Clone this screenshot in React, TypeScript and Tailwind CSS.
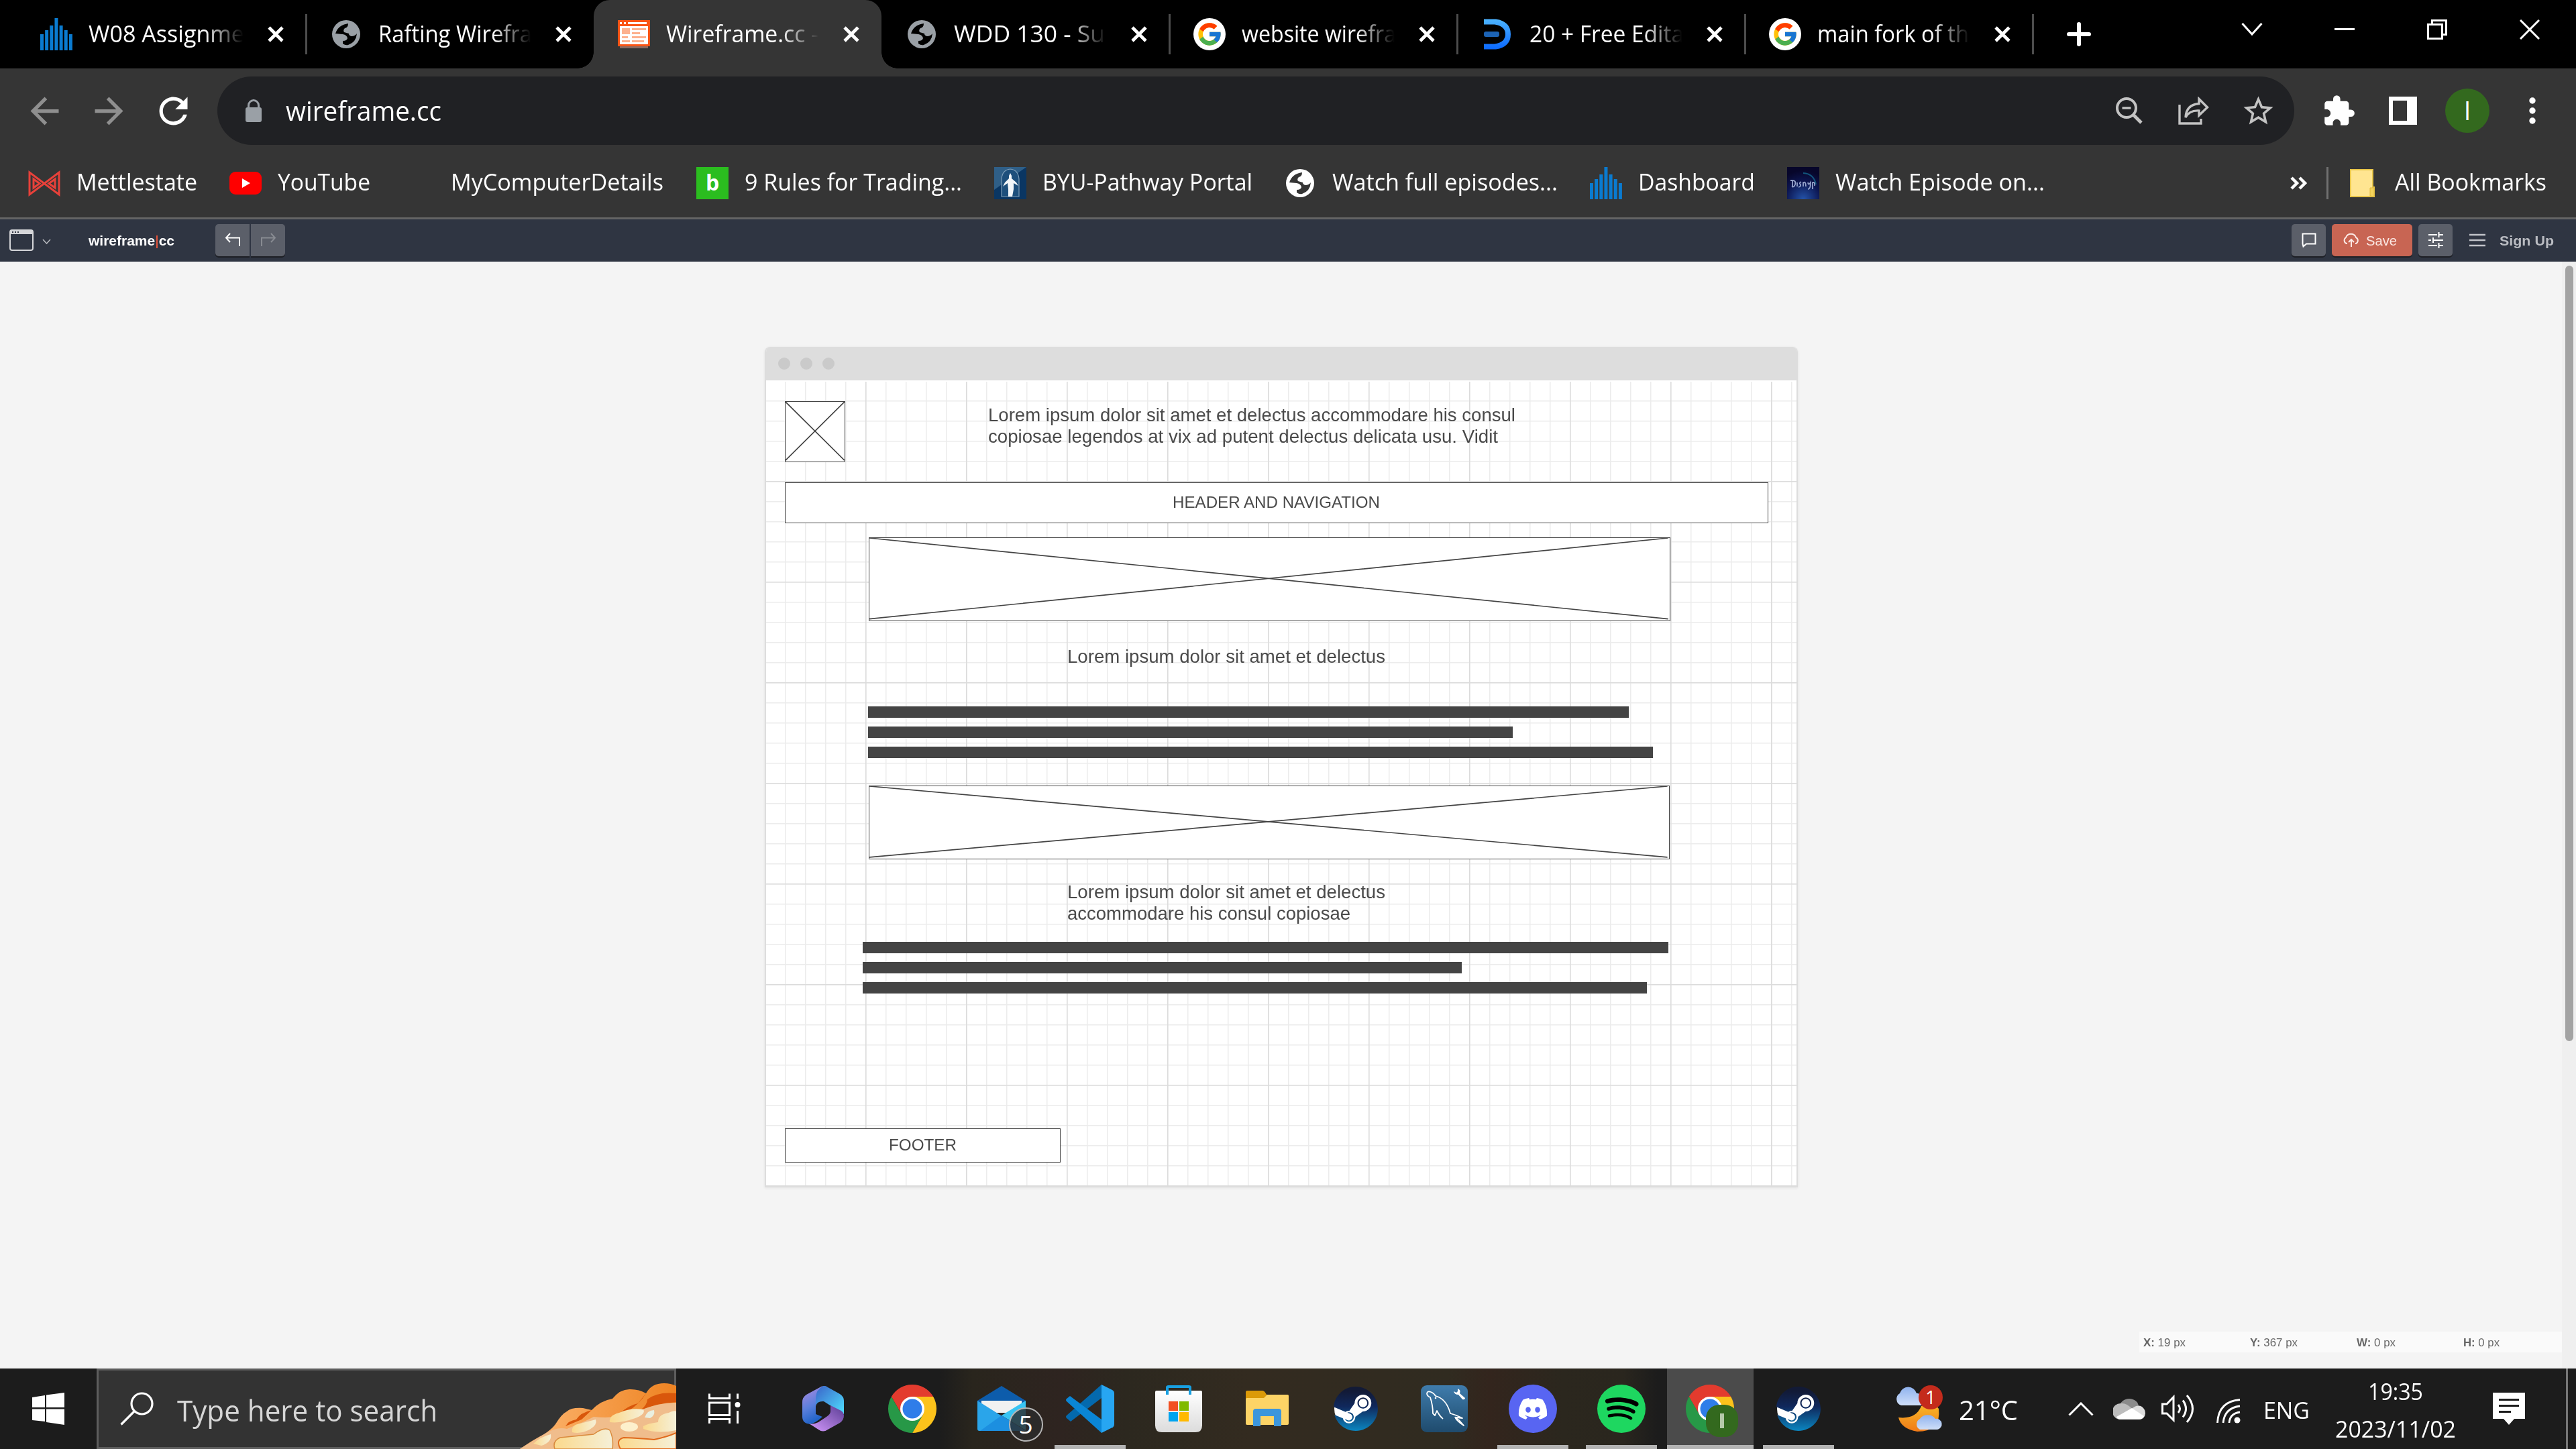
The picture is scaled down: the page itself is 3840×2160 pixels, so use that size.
import React, { useLayoutEffect, useRef, useState } from "react";
import { MdArrowBack, MdArrowForward, MdRefresh, MdStarBorder, MdExtension } from "react-icons/md";
import { FcGoogle } from "react-icons/fc";
import { FaDiscord, FaSteam, FaSpotify } from "react-icons/fa";

/* Text that is condensed or widened to a given advance width. */
function Fit({ w, className = "", children }: { w: number; className?: string; children: React.ReactNode }) {
  const ref = useRef<HTMLSpanElement>(null);
  const [k, setK] = useState(1);
  useLayoutEffect(() => {
    if (ref.current) setK(w / parseFloat(getComputedStyle(ref.current).width));
  }, [w]);
  return (
    <span className={"block shrink-0 whitespace-nowrap " + className} style={{ width: w }}>
      <span ref={ref} className="inline-block origin-left" style={{ transform: `scaleX(${k})` }}>
        {children}
      </span>
    </span>
  );
}

/* ---------- shared icons ---------- */

function BarsIcon() {
  const tops = [24, 18, 11, 0, 11, 18, 24];
  return (
    <svg className="size-[48px] shrink-0" viewBox="0 0 48 48" fill="#0a7bd0">
      {tops.map((t, i) => (
        <rect key={i} x={i * 7.15} y={t} width="5" height={48 - t} />
      ))}
    </svg>
  );
}

function Globe({ className, land }: { className: string; land: string }) {
  return (
    <svg className={"size-[48px] shrink-0 " + className} viewBox="0 0 48 48">
      <circle cx="24" cy="24" r="21" fill="currentColor" />
      <path
        d="M27 8Q12 10 8 23L19 24Q25 25 26 30Q25 34 19 34V38Q23 41 27 40Q39 36 40 23Q37 27 32 27Q28 26 28 23L21 21Q19 18 22 15Q27 14 27 8Z"
        fill={land}
      />
    </svg>
  );
}

function GoogleIcon() {
  return (
    <span className="flex size-[48px] shrink-0 items-center justify-center rounded-full bg-white">
      <FcGoogle className="size-[40px]" />
    </span>
  );
}

function WireIcon() {
  return (
    <svg className="size-[48px] shrink-0" viewBox="0 0 48 48">
      <rect x="3" y="42" width="42" height="3" fill="#8d6a60" />
      <rect x="0" y="3" width="48" height="39" fill="#fa5414" />
      <path d="M3 6H6V9H3ZM9 6H12V9H9ZM15 6H43V9H15Z" fill="#fff" />
      <rect x="3" y="12" width="42" height="27" fill="#fff" />
      <path d="M6 15H18V24H6ZM21 15H42V18H21ZM21 21H33V24H21ZM6 27H15V30H6ZM21 27H42V30H21ZM6 33H18V36H6ZM21 33H39V36H21Z" fill="#fdb18e" />
    </svg>
  );
}

function EdrawIcon() {
  return (
    <svg className="size-[48px] shrink-0" viewBox="0 0 48 48" fill="none">
      <defs>
        <linearGradient id="ed" x1="0" y1="0" x2="0" y2="1">
          <stop offset="0" stopColor="#4cb4ff" />
          <stop offset="1" stopColor="#0a68ff" />
        </linearGradient>
      </defs>
      <path d="M4 1.500H22Q44 5 44 24Q44 43 22 46.500H4V38.500H20Q36 36 36 24Q36 12 20 9.500H4Z" fill="url(#ed)" />
      <rect x="4" y="20" width="23" height="8" rx="3" fill="#1c63b5" />
    </svg>
  );
}

function CloseX() {
  return (
    <svg className="h-[24px] w-[26px] shrink-0" viewBox="0 0 26 24" stroke="#fff" strokeWidth="4.800">
      <path d="M3 2L23 22M23 2L3 22" />
    </svg>
  );
}

/* ---------- tab strip ---------- */

const tabs = [
  { icon: <BarsIcon />, text: "W08 Assignme", w: 232 },
  { icon: <Globe className="text-[#9aa0a6]" land="#000" />, text: "Rafting Wirefra", w: 229 },
  { icon: <WireIcon />, text: "Wireframe.cc -", w: 227, active: true },
  { icon: <Globe className="text-[#9aa0a6]" land="#000" />, text: "WDD 130 - Su", w: 225 },
  { icon: <GoogleIcon />, text: "website wirefra", w: 230 },
  { icon: <EdrawIcon />, text: "20 + Free Edita", w: 230 },
  { icon: <GoogleIcon />, text: "main fork of th", w: 226 },
];

function TabStrip() {
  return (
    <div className="flex h-[102px] shrink-0 bg-black text-white">
      <div className="w-[27px] shrink-0" />
      {tabs.map((t, i) => (
        <div
          key={i}
          className={
            "relative flex h-[102px] w-[429px] shrink-0 items-center " +
            (i === 0 ? "pl-[33px] " : "pl-[36px] ") +
            (t.active ? "rounded-t-[24px] bg-[#353535]" : "")
          }
        >
          {t.active && (
            <>
              <span className="absolute bottom-0 -left-[24px] size-[24px] bg-[radial-gradient(circle_at_0_0,#000_23.500px,#353535_24px)]" />
              <span className="absolute bottom-0 -right-[24px] size-[24px] bg-[radial-gradient(circle_at_100%_0,#000_23.500px,#353535_24px)]" />
            </>
          )}
          {t.icon}
          <div className={"ml-[24px] shrink-0 overflow-hidden pb-[2px] [mask-image:linear-gradient(to_right,black_74%,transparent_99%)] " + (i === 0 ? "w-[233px]" : "w-[230px]")}>
            <Fit w={t.w} className="text-[35px] leading-[50px]">{t.text}</Fit>
          </div>
          <div className="ml-[33px]">
            <CloseX />
          </div>
          {i !== 1 && i !== 2 && <span className="mr-[-2px] ml-auto h-[60px] w-[3px] bg-[#4c4c4c]" />}
        </div>
      ))}
      <div className="flex w-[130px] shrink-0 items-center pl-[51px]">
        <svg className="size-[36px]" viewBox="0 0 36 36" stroke="#fff" strokeWidth="6" strokeLinecap="round">
          <path d="M18 3V33M3 18H33" />
        </svg>
      </div>
      <div className="ml-auto flex h-[87px] w-[552px] items-center">
        <div className="flex w-[138px] justify-center">
          <svg className="h-[22px] w-[32px]" viewBox="0 0 32 22" fill="none" stroke="#fff" strokeWidth="3">
            <path d="M1.500 2L16 18L30.500 2" />
          </svg>
        </div>
        <div className="flex w-[138px] justify-center">
          <span className="h-[3px] w-[30px] bg-white" />
        </div>
        <div className="flex w-[138px] justify-center">
          <svg className="size-[30px]" viewBox="0 0 30 30" fill="none" stroke="#fff" strokeWidth="3">
            <path d="M1.500 7.500H22.500V28.500H1.500ZM7.500 7.500V1.500H28.500V22.500H22.500" />
          </svg>
        </div>
        <div className="flex w-[138px] justify-center">
          <svg className="size-[30px]" viewBox="0 0 30 30" stroke="#fff" strokeWidth="3">
            <path d="M1 1L29 29M29 1L1 29" />
          </svg>
        </div>
      </div>
    </div>
  );
}

/* ---------- address row ---------- */

function Cell({ children }: { children: React.ReactNode }) {
  return <div className="flex w-[96px] shrink-0 items-center justify-center">{children}</div>;
}

function AddressRow() {
  return (
    <div className="flex h-[126px] shrink-0 items-center bg-[#353535] pl-[18px] text-white">
      <Cell><MdArrowBack className="size-[63px] text-[#8f8f8f]" /></Cell>
      <Cell><MdArrowForward className="size-[63px] text-[#8f8f8f]" /></Cell>
      <Cell><MdRefresh className="size-[63px]" /></Cell>
      <div className="ml-[18px] flex h-[102px] w-[3096px] shrink-0 items-center rounded-full bg-[#202124] pr-[6px] pl-[42px]">
        <svg className="h-[34px] w-[24px] shrink-0" viewBox="0 0 24 34">
          <path d="M4.500 14V9a7.500 7.500 0 0 1 15 0v5" fill="none" stroke="#9aa0a6" strokeWidth="3" />
          <rect x="0" y="12" width="24" height="22" rx="3" fill="#9aa0a6" />
        </svg>
        <Fit w={232} className="ml-[36px] pb-[3px] text-[41px] leading-[60px]">wireframe.cc</Fit>
        <div className="ml-auto flex items-center text-[#c3c3c3]">
          <Cell>
            <svg className="size-[42px]" viewBox="0 0 42 42" fill="none" stroke="#c3c3c3" strokeWidth="4">
              <circle cx="17" cy="17" r="14" />
              <path d="M27 27L39 39" strokeWidth="5" />
              <path d="M10.500 17H23.500" strokeWidth="3.400" />
            </svg>
          </Cell>
          <Cell>
            <svg className="h-[42px] w-[46px]" viewBox="0 0 46 42" fill="none" stroke="#c3c3c3" strokeWidth="3.400">
              <path d="M2 12V40H34V33" />
              <path d="M31 3.500L43.500 16L31 28V21Q17 20 11 31Q12 12 31 10.500Z" />
            </svg>
          </Cell>
          <Cell><MdStarBorder className="size-[53px]" /></Cell>
        </div>
      </div>
      <div className="ml-[18px] flex items-center">
        <Cell><MdExtension className="size-[51px]" /></Cell>
        <Cell>
          <svg className="size-[42px]" viewBox="0 0 42 42"><path fill="#fff" fillRule="evenodd" d="M0 0H42V42H0ZM6 6V36H27V6Z" /></svg>
        </Cell>
        <Cell>
          <span className="flex size-[66px] items-center justify-center rounded-full bg-[#33691e] pb-[2px] text-[38px] leading-none">I</span>
        </Cell>
        <Cell>
          <svg className="ml-[2px] h-[40px] w-[10px]" viewBox="0 0 10 40" fill="#fff">
            <circle cx="5" cy="5" r="4.700" /><circle cx="5" cy="20" r="4.700" /><circle cx="5" cy="35" r="4.700" />
          </svg>
        </Cell>
      </div>
    </div>
  );
}

/* ---------- bookmarks ---------- */

const MettleIcon = (
  <svg className="size-[48px] shrink-0" viewBox="0 0 48 48" fill="none" stroke="#e8413a" strokeWidth="3">
    <path d="M2 8V41L46 8V41L2 8ZM8 18V31L17 24.500ZM40 18V31L31 24.500Z" />
  </svg>
);
const YouTubeIcon = (
  <svg className="size-[48px] shrink-0" viewBox="0 0 48 48">
    <rect x="0" y="7" width="48" height="34" rx="9" fill="#f00" />
    <path d="M19 17L31 24L19 31Z" fill="#fff" />
  </svg>
);
const BIcon = (
  <span className="flex size-[48px] shrink-0 items-center justify-center bg-[#2bbd1f] pb-[2px] text-[32px] leading-none font-bold">b</span>
);
const ByuIcon = (
  <svg className="size-[48px] shrink-0" viewBox="0 0 48 48">
    <rect width="48" height="48" fill="#0a3663" />
    <path d="M0 0H48L14 24L0 34Z" fill="#2f5f88" />
    <path d="M11 44V18Q12 4 24 3Q36 4 37 18V44Z" fill="#1d4f7c" stroke="#7d9db8" strokeWidth="1.200" />
    <path d="M24 9l2 4v4l7 6 3 5-7-4v9l-2 11h-6l0-11-1-9-7 5 3-6 6-6v-4z" fill="#f2f6f9" />
  </svg>
);
const DisneyIcon = (
  <svg className="size-[48px] shrink-0" viewBox="0 0 48 48" fill="none">
    <defs>
      <radialGradient id="dn" cx="0.500" cy="1" r="1"><stop offset="0" stopColor="#2453a8" /><stop offset="0.550" stopColor="#0c1550" /><stop offset="0.900" stopColor="#07062a" /></radialGradient>
    </defs>
    <rect width="48" height="48" fill="url(#dn)" />
    <path d="M24 9Q40 10 43 26" stroke="#12557c" strokeWidth="2" />
    <path d="M5 20Q14 19 12 26Q10 31 7 29M8 19V30M15 23V29M21 22Q17 24 20 26Q21 29 17 30M24 29V23Q28 21 28 29M31 23Q32 28 35 23Q35 33 31 33M38 33V23Q42 22 41 28" stroke="#b9c8ea" strokeWidth="1.800" opacity="0.800" />
  </svg>
);

const bookmarks = [
  { box: "w-[300px]", icon: MettleIcon, text: "Mettlestate", w: 180 },
  { box: "w-[258px]", icon: YouTubeIcon, text: "YouTube", w: 138 },
  { box: "w-[438px]", icon: <span className="size-[48px] shrink-0" />, text: "MyComputerDetails", w: 317 },
  { box: "w-[444px]", icon: BIcon, text: "9 Rules for Trading...", w: 324 },
  { box: "w-[432px]", icon: ByuIcon, text: "BYU-Pathway Portal", w: 313 },
  { box: "w-[456px]", icon: <Globe className="text-white" land="#353535" />, text: "Watch full episodes...", w: 336 },
  { box: "w-[294px]", icon: <BarsIcon />, text: "Dashboard", w: 174 },
  { box: "w-[400px]", icon: DisneyIcon, text: "Watch Episode on...", w: 312 },
];

function Bookmarks() {
  return (
    <div className="flex h-[99px] shrink-0 items-center border-b-[3px] border-[#646464] bg-[#353535] pb-[6px] pl-[42px] text-white">
      {bookmarks.map((b) => (
        <div key={b.text} className={"flex shrink-0 items-center " + b.box}>
          {b.icon}
          <Fit w={b.w} className="ml-[24px] pb-[5px] text-[35px] leading-[48px]">{b.text}</Fit>
        </div>
      ))}
      <svg className="ml-[350px] h-[20px] w-[26px] shrink-0" viewBox="0 0 26 20" fill="none" stroke="#fff" strokeWidth="4.500">
        <path d="M2 2L10 10L2 18M14 2L22 10L14 18" />
      </svg>
      <span className="ml-[28px] h-[48px] w-[3px] shrink-0 bg-[#707070]" />
      <svg className="ml-[32px] h-[42px] w-[37px] shrink-0" viewBox="0 0 37 42">
        <path d="M1 1H34V27H36V41H1Z" fill="#ffe591" stroke="#e9c64a" strokeWidth="2" />
        <path d="M30 40V28H36V41Z" fill="#f4d35c" stroke="#e0b93c" />
      </svg>
      <Fit w={226} className="ml-[30px] pb-[5px] text-[35px] leading-[48px]">All Bookmarks</Fit>
    </div>
  );
}

/* ---------- editor toolbar ---------- */

function EditorBar() {
  return (
    <div className="flex h-[63px] shrink-0 items-center bg-[#2f3542] pb-[1px] pl-[14px] font-['Liberation_Sans',sans-serif] text-white">
      <svg className="h-[32px] w-[36px] shrink-0" viewBox="0 0 36 32">
        <rect x="1" y="1" width="34" height="30" rx="3" fill="none" stroke="#d5d6d9" strokeWidth="2" />
        <rect x="1" y="1" width="34" height="6" fill="#d5d6d9" />
        <path d="M4 4h2M8 4h2M12 4h2" stroke="#2f3542" strokeWidth="2" />
      </svg>
      <svg className="mt-[4px] ml-[13px] h-[8px] w-[13px] shrink-0" viewBox="0 0 13 8" fill="none" stroke="#b5b7bc" strokeWidth="1.600">
        <path d="M1 1L6.500 7L12 1" />
      </svg>
      <Fit w={128} className="ml-[56px] pt-[2px] text-[20.500px] leading-[24px] font-bold">
        wireframe<span className="font-normal text-[#ff5a3c]">|</span>cc
      </Fit>
      <div className="ml-[61px] flex h-[48px] shrink-0 gap-[2px]">
        <div className="flex w-[51px] items-center justify-center rounded-l-[5px] bg-[#5b5f69] shadow-[0_2px_0_#1d1f24]">
          <svg className="h-[22px] w-[24px]" viewBox="0 0 24 22" fill="none" stroke="#fff" strokeWidth="2">
            <path d="M8 1L2 7.500L8 14M2 7.500H22V20" />
          </svg>
        </div>
        <div className="flex w-[51px] items-center justify-center rounded-r-[5px] bg-[#5b5f69] shadow-[0_2px_0_#1d1f24]">
          <svg className="h-[22px] w-[24px]" viewBox="0 0 24 22" fill="none" stroke="#888b92" strokeWidth="2">
            <path d="M16 1L22 7.500L16 14M22 7.500H2V20" />
          </svg>
        </div>
      </div>
      <div className="ml-auto flex w-[424px] shrink-0 items-center">
        <div className="flex h-[48px] w-[51px] items-center justify-center rounded-[5px] bg-[#5b5f69] shadow-[0_2px_0_#1d1f24]">
          <svg className="h-[22px] w-[22px]" viewBox="0 0 22 22" fill="none" stroke="#fff" strokeWidth="2">
            <path d="M1.500 1.500H20.500V16.500H7L2.500 20.500L1.500 16.500Z" />
          </svg>
        </div>
        <div className="ml-[9px] flex h-[48px] w-[120px] items-center rounded-[5px] bg-[#c86553] pl-[16px] shadow-[0_2px_0_#1d1f24]">
          <svg className="h-[22px] w-[26px]" viewBox="0 0 26 22" fill="none" stroke="#fbe9e5" strokeWidth="2">
            <path d="M7 16H6A5 5 0 0 1 5 7A8 8 0 0 1 20 7A5 5 0 0 1 20 16H19M13 21V11M9 14L13 10L17 14" />
          </svg>
          <Fit w={46} className="ml-[9px] pt-[2px] text-[20.500px] leading-[24px] text-[#fbe9e5]">Save</Fit>
        </div>
        <div className="ml-[9px] flex h-[48px] w-[51px] items-center justify-center rounded-[5px] bg-[#5b5f69] shadow-[0_2px_0_#1d1f24]">
          <svg className="h-[24px] w-[22px]" viewBox="0 0 22 24" fill="none" stroke="#fff" strokeWidth="2">
            <path d="M0 4H13M16 4H22M0 12H4M8 12H22M0 20H13M16 20H22M15.500 0V8M7 8V16M15.500 16V24" />
          </svg>
        </div>
        <svg className="ml-[25px] h-[20px] w-[24px]" viewBox="0 0 24 20" stroke="#c2c4c9" strokeWidth="2.400">
          <path d="M0 2H24M0 10H24M0 18H24" />
        </svg>
        <Fit w={81} className="ml-[21px] pt-[2px] text-[20.500px] leading-[24px] font-bold text-[#babcc2]">Sign Up</Fit>
      </div>
    </div>
  );
}

/* ---------- wireframe canvas: freely placed shapes ---------- */

function Crossed({ className }: { className: string }) {
  return (
    <div className={"absolute border border-[#444] bg-white " + className}>
      <svg className="block size-full" viewBox="0 0 100 100" preserveAspectRatio="none" stroke="#444" fill="none">
        <path d="M0 0L99.800 98M0 98L99.800 0" strokeWidth="1.700" vectorEffect="non-scaling-stroke" />
      </svg>
    </div>
  );
}

function Bar({ className }: { className: string }) {
  return <div className={"absolute h-[17px] bg-[#444] " + className} />;
}

function Mockup() {
  return (
    <div className="mt-[127px] ml-[1140px] flex h-[1253px] w-[1540px] shrink-0 flex-col overflow-hidden rounded-t-[8px] border-x-2 border-b-2 border-[#ddd] shadow-[0_1px_4px_rgba(0,0,0,0.07)]">
      <div className="flex h-[50px] shrink-0 items-center gap-[15px] bg-[#ddd] pl-[18px]">
        <span className="size-[18px] rounded-full bg-[#cacaca]" />
        <span className="size-[18px] rounded-full bg-[#cacaca]" />
        <span className="size-[18px] rounded-full bg-[#cacaca]" />
      </div>
      <div className="relative flex-1 bg-white font-['Liberation_Sans',sans-serif] text-[#4a4a4a]">
        <svg className="absolute inset-0 size-full">
          <defs>
            <pattern id="minor" x="-2" y="0" width="30" height="30" patternUnits="userSpaceOnUse">
              <path d="M0.750 0V30M0 0.750H30" stroke="#ececec" strokeWidth="1.500" fill="none" />
            </pattern>
            <pattern id="major" x="-2" y="0" width="150" height="150" patternUnits="userSpaceOnUse">
              <path d="M0.750 0V150M0 0.750H150" stroke="#dcdcdc" strokeWidth="1.500" fill="none" />
            </pattern>
          </defs>
          <rect width="100%" height="100%" fill="url(#minor)" />
          <rect width="100%" height="100%" fill="url(#major)" />
          <rect width="100%" height="2" fill="#fff" />
        </svg>
        <Crossed className="top-[31px] left-[28px] h-[91px] w-[90px]" />
        <div className="absolute top-[36px] left-[331px] text-[27.300px] leading-[32px]">
          <Fit w={786}>Lorem ipsum dolor sit amet et delectus accommodare his consul</Fit>
          <Fit w={760}>copiosae legendos at vix ad putent delectus delicata usu. Vidit</Fit>
        </div>
        <div className="absolute top-[152px] left-[28px] flex h-[61px] w-[1466px] justify-center border border-[#444] bg-white pt-[13px] pr-[2px] text-[24px] leading-[32px]">
          <Fit w={309}>HEADER AND NAVIGATION</Fit>
        </div>
        <Crossed className="top-[234px] left-[153px] h-[125px] w-[1195px]" />
        <div className="absolute top-[396px] left-[449px] text-[27.300px] leading-[32px]">
          <Fit w={474}>Lorem ipsum dolor sit amet et delectus</Fit>
        </div>
        <Bar className="top-[486px] left-[152px] w-[1134px]" />
        <Bar className="top-[516px] left-[152px] w-[961px]" />
        <Bar className="top-[546px] left-[152px] w-[1170px]" />
        <Crossed className="top-[604px] left-[153px] h-[110px] w-[1194px]" />
        <div className="absolute top-[747px] left-[449px] text-[27.300px] leading-[32px]">
          <Fit w={474}>Lorem ipsum dolor sit amet et delectus</Fit>
          <Fit w={422}>accommodare his consul copiosae</Fit>
        </div>
        <Bar className="top-[837px] left-[144px] w-[1201px]" />
        <Bar className="top-[867px] left-[144px] w-[893px]" />
        <Bar className="top-[897px] left-[144px] w-[1169px]" />
        <div className="absolute top-[1115px] left-[28px] flex h-[51px] w-[411px] justify-center border border-[#444] bg-white pt-[8px] pr-[1px] text-[24px] leading-[32px]">
          <Fit w={101}>FOOTER</Fit>
        </div>
      </div>
    </div>
  );
}

const coords = [
  { k: "X:", v: "19 px", w: 63 },
  { k: "Y:", v: "367 px", w: 71 },
  { k: "W:", v: "0 px", w: 58 },
  { k: "H:", v: "0 px", w: 54 },
];

function Workspace() {
  return (
    <div className="flex h-[1650px] shrink-0 bg-[#f4f4f4]">
      <div className="flex w-[3819px] shrink-0 flex-col">
        <Mockup />
        <div className="mt-auto mb-[24px] ml-auto flex h-[31px] w-[630px] shrink-0 items-center bg-[#fafafa] pl-[6px] font-['Liberation_Sans',sans-serif] text-[16.500px] leading-[20px] text-[#666]">
          {coords.map((c) => (
            <div key={c.k} className="w-[159px] shrink-0">
              <Fit w={c.w}><b>{c.k}</b> {c.v}</Fit>
            </div>
          ))}
        </div>
      </div>
      <div className="flex w-[21px] justify-center bg-[#efefef] pt-[6px]">
        <span className="h-[1156px] w-[12px] rounded-full bg-[#a3a3a3]" />
      </div>
    </div>
  );
}

/* ---------- taskbar icons ---------- */

function ChromeLogo() {
  return (
    <svg className="size-[72px]" viewBox="-36 -36 72 72">
      <path d="M-31.180 -18A36 36 0 0 1 31.180 -18L0 -18L-15.590 9Z" fill="#e33b2e" />
      <path d="M31.180 -18A36 36 0 0 1 0 36L15.590 9L0 -18Z" fill="#fcc21b" />
      <path d="M0 36A36 36 0 0 1 -31.180 -18L-15.590 9L15.590 9Z" fill="#279847" />
      <circle r="18" fill="#fff" />
      <circle r="14.500" fill="#2f7de9" />
    </svg>
  );
}

function M365() {
  return (
    <svg className="h-[68px] w-[62px]" viewBox="0 0 62 68">
      <defs>
        <linearGradient id="ma" x1="0" y1="0" x2="0.300" y2="1"><stop offset="0" stopColor="#b18ae0" /><stop offset="0.600" stopColor="#5a7fdc" /><stop offset="1" stopColor="#2264c8" /></linearGradient>
        <linearGradient id="mb" x1="0" y1="0" x2="1" y2="1"><stop offset="0" stopColor="#3a63c8" /><stop offset="1" stopColor="#4fe0ff" /></linearGradient>
        <linearGradient id="mc" x1="1" y1="0" x2="0" y2="1"><stop offset="0" stopColor="#5a3c93" /><stop offset="1" stopColor="#d69bff" /></linearGradient>
      </defs>
      <path d="M30 0L6 13Q0 17 0 24V46Q0 56 12 57Q20 55 30 46L20 42V29Q20 25 25 23Z" fill="url(#ma)" />
      <path d="M31 0Q20 6 20 18V30Q22 22 32 23L62 42V22Q62 16 56 12L38 2Q34 -1 31 0Z" fill="url(#mb)" />
      <path d="M42 29V38Q42 42 36 46L24 54Q16 58 10 56L24 65Q31 70 38 65L56 55Q62 51 62 44Q62 38 54 35Z" fill="url(#mc)" />
    </svg>
  );
}

function MailIcon() {
  return (
    <div className="relative h-[68px] w-[72px]">
      <svg className="size-full" viewBox="0 0 72 68">
        <path d="M0 22L36 0L72 22V30H0Z" fill="#0d5cab" />
        <path d="M6 22H66V40H6Z" fill="#f1f1f1" />
        <path d="M0 22L72 67H3Q0 67 0 64Z" fill="#2aa5ea" />
        <path d="M72 22L36 44L72 66Z" fill="#38c4f3" />
        <path d="M36 44L72 67H4Z" fill="#1c8fe0" />
      </svg>
      <span className="absolute top-[32px] left-[47px] flex size-[51px] items-center justify-center rounded-full border-2 border-[#b5b5b5] bg-[#2c2c2ccc] pb-[2px] text-[37px] leading-none text-white">5</span>
    </div>
  );
}

function VsCode() {
  return (
    <svg className="size-[72px]" viewBox="0 0 72 72">
      <path d="M53 0V20L7 55L1 50Q-1 48 1 46Z" fill="#0469ad" />
      <path d="M1 25Q-1 23 1 21L6 17L53 52V72Z" fill="#0a86d6" />
      <path d="M53 0L69 8Q72 9.500 72 13V59Q72 62.500 69 64L53 72Z" fill="#27a6f2" />
    </svg>
  );
}

function StoreIcon() {
  return (
    <svg className="size-[70px]" viewBox="0 0 70 70">
      <defs><linearGradient id="st" x1="0" y1="0" x2="0" y2="1"><stop offset="0" stopColor="#fff" /><stop offset="1" stopColor="#dcdcdc" /></linearGradient></defs>
      <path d="M0 10Q0 8 2 8H68Q70 8 70 10V60Q70 70 60 70H10Q0 70 0 60Z" fill="url(#st)" />
      <path d="M18 14V3Q18 2 20 2H50Q52 2 52 3V14" fill="none" stroke="#189fe0" strokeWidth="4" />
      <rect x="20" y="24" width="14" height="14" fill="#f25022" />
      <rect x="36" y="24" width="14" height="14" fill="#7fba00" />
      <rect x="20" y="40" width="14" height="14" fill="#00a4ef" />
      <rect x="36" y="40" width="14" height="14" fill="#ffb900" />
    </svg>
  );
}

function FolderIcon() {
  return (
    <svg className="mt-[-1px] h-[54px] w-[64px]" viewBox="0 0 64 54">
      <path d="M0 2Q0 0 2 0H25Q28 0 31 6H62Q64 6 64 8V30H0Z" fill="#dc9a08" />
      <path d="M0 13Q0 11 2 11H27L32 6H62Q64 6 64 8V49Q64 51 62 51H2Q0 51 0 49Z" fill="#fdd466" />
      <path d="M11 53V31Q11 27 15 27H49Q53 27 53 31V53H42V38H22V53Z" fill="#3c96dc" />
    </svg>
  );
}

function Steam() {
  return (
    <div className="relative size-[68px]">
      <svg className="absolute inset-0 size-full" viewBox="0 0 68 68">
        <defs><linearGradient id="sg" x1="0" y1="0" x2="0" y2="1"><stop offset="0.100" stopColor="#121a36" /><stop offset="0.450" stopColor="#10285c" /><stop offset="1" stopColor="#0b86c0" /></linearGradient></defs>
        <circle cx="34" cy="34" r="32" fill="#fff" />
      </svg>
      <FaSteam className="absolute inset-0 size-full [&_path]:fill-[url(#sg)]" />
    </div>
  );
}

function MySql() {
  return (
    <svg className="size-[70px]" viewBox="0 0 70 70">
      <defs><linearGradient id="mq" x1="0" y1="0" x2="0" y2="1"><stop offset="0" stopColor="#3f7cac" /><stop offset="1" stopColor="#1f4b6d" /></linearGradient></defs>
      <rect width="70" height="70" rx="9" fill="url(#mq)" />
      <path d="M9 12Q10 8 15 10Q20 12 22 16Q38 20 44 42Q52 44 62 49L53 48Q54 51 57 52L64 60Q52 52 51 47M9 12Q9 16 14 18Q18 30 18 42L21 45L24 38Q28 46 33 50" fill="none" stroke="#fff" strokeWidth="1.800" strokeLinejoin="round" />
      <circle cx="22" cy="19" r="1.300" fill="#fff" />
      <path d="M55 5Q60 7 58 12L66 19Q66 22 62 21L56 14Q50 14 49 9L53 11L55 9Z" fill="#fff" />
    </svg>
  );
}

const apps = [
  { icon: <M365 /> },
  { icon: <ChromeLogo /> },
  { icon: <MailIcon /> },
  { icon: <VsCode />, open: true },
  { icon: <StoreIcon /> },
  { icon: <FolderIcon /> },
  { icon: <Steam /> },
  { icon: <MySql /> },
  { icon: <span className="flex size-[72px] items-center justify-center rounded-full bg-[#5865f2] text-white"><FaDiscord className="size-[46px]" /></span>, open: true },
  { icon: <span className="flex size-[72px] rounded-full bg-[#1ed760] bg-[radial-gradient(circle,#000_60%,transparent_61%)]"><FaSpotify className="size-full text-[#1ed760]" /></span>, open: true },
  {
    icon: (
      <div className="relative">
        <ChromeLogo />
        <span className="absolute top-[30px] left-[30px] flex size-[48px] items-center justify-center rounded-[20px] bg-[#33691e]">
          <span className="h-[22px] w-[6px] bg-[#b5c9a9]" />
        </span>
      </div>
    ),
    active: true,
  },
  { icon: <Steam />, open: true },
];

function PieArt() {
  return (
    <svg className="absolute right-0 bottom-0 h-[100px] w-[233px]" viewBox="0 0 233 100">
      <defs>
        <linearGradient id="pc" x1="0" y1="0" x2="1" y2="0"><stop offset="0" stopColor="#fdb874" /><stop offset="1" stopColor="#ee8322" /></linearGradient>
        <linearGradient id="pf" x1="0" y1="0" x2="1" y2="0"><stop offset="0" stopColor="#fbd98c" /><stop offset="1" stopColor="#f5f0d8" /></linearGradient>
      </defs>
      <path d="M0 100Q20 86 36 78Q48 70 53 63Q62 48 70 44Q76 38 94 39L107 42Q120 28 138 25Q150 10 165 11Q178 11 188 17Q196 2 215 2Q225 2 233 6V100Z" fill="url(#pc)" />
      <path d="M188 17Q178 34 160 44L148 47Q164 34 176 32Z" fill="#d9570b" />
      <path d="M107 42L92 56L68 66Q72 58 84 56Q90 46 107 42Z" fill="#d9570b" />
      <path d="M190 26Q205 14 233 17V30Q205 32 180 42Q190 34 190 26Z" fill="#d9570b" />
      <path d="M0 100L36 78Q55 66 70 70Q95 60 110 52Q150 56 180 42Q210 30 233 31V100Z" fill="#f0bd8c" />
      <path d="M52 100Q48 88 60 83Q90 80 110 78Q126 66 134 72Q140 84 138 100Z" fill="url(#pf)" stroke="#d98a3c" strokeWidth="1.500" />
      <path d="M150 100Q142 86 155 83Q180 84 200 86Q220 82 233 76V100Z" fill="url(#pf)" stroke="#e06a1c" strokeWidth="2" />
      <path d="M78 75Q76 64 90 62L113 56Q116 64 104 71Q90 78 78 75Z" fill="url(#pf)" />
      <path d="M134 60Q132 50 148 46Q165 38 184 41Q188 48 172 54Q150 62 134 60Z" fill="url(#pf)" />
      <path d="M186 53Q190 42 200 42Q202 50 194 54Z" fill="#e9efe0" />
      <ellipse cx="163" cy="67" rx="13" ry="7" fill="#fdf0cc" />
      <path d="M184 66Q190 62 206 60Q206 48 222 46Q230 42 233 44V72Q205 78 184 70Z" fill="url(#pf)" />
      <path d="M20 92Q30 82 46 78Q48 90 32 95Z" fill="url(#pf)" />
    </svg>
  );
}

function Taskbar() {
  return (
    <div className="relative flex h-[120px] shrink-0 items-stretch bg-[linear-gradient(to_right,#1c1c1c_1400px,#29251d_1450px,#2e2420_1580px,#2c281f_1680px,#332b20_1860px,#302b20_2160px,#33251d_2220px,#2b271e_2330px,#2a261e_2420px,#1c1c1c_2470px)] text-white">
      <div className="flex w-[144px] shrink-0 items-center justify-center">
        <svg className="size-[48px]" viewBox="0 0 48 48" fill="#fff">
          <path d="M0 7L19 4V22H0ZM21 3.500L48 0V22H21ZM0 24.500H19V43L0 41ZM21 24.500H48V48L21 44Z" />
        </svg>
      </div>
      <div className="relative flex w-[864px] shrink-0 items-center border-[3px] border-[#5d5d5d] bg-[#333] pl-[32px]">
        <svg className="size-[50px] shrink-0" viewBox="0 0 50 50" fill="none" stroke="#fff" strokeWidth="3.200">
          <circle cx="32.500" cy="17.500" r="15.500" /><path d="M21.500 28.500L1.500 48.500" />
        </svg>
        <Fit w={388} className="ml-[35px] pt-[3px] text-[44px] leading-[60px] text-[#d6d6d6]">Type here to search</Fit>
        <div className="absolute -right-[3px] -bottom-[3px]"><PieArt /></div>
      </div>
      <div className="flex w-[152px] shrink-0 items-center pl-[48px]">
        <svg className="size-[48px]" viewBox="0 0 48 48" fill="none" stroke="#fff" strokeWidth="3">
          <path d="M1.500 1.500V8.500H31.500V1.500M1.500 46V39.500H31.500V46M1.500 15H31.500V33.500H1.500ZM43.500 1.500V9M43.500 27V46" />
          <circle cx="43.500" cy="18" r="4" fill="#fff" stroke="none" />
        </svg>
      </div>
      {apps.map((a, i) => (
        <div key={i} className={"flex shrink-0 justify-center " + (i < 3 ? "w-[133px]" : "w-[132px]")}>
          <div className={"relative flex items-center justify-center " + (a.active ? "w-[129px] bg-[#4b4b4b]" : "w-[106px]")}>
            {a.icon}
            {(a.open || a.active) && <span className="absolute inset-x-0 bottom-0 h-[6px] bg-[#b3b3b3]" />}
          </div>
        </div>
      ))}
      <div className="ml-[77px] flex shrink-0 items-center">
        <div className="relative size-[72px]">
          <svg className="size-full" viewBox="0 0 72 72">
            <defs>
              <linearGradient id="cl" x1="0" y1="0" x2="0" y2="1"><stop offset="0" stopColor="#8fb2ee" /><stop offset="1" stopColor="#cfdff9" /></linearGradient>
              <linearGradient id="mn" x1="0" y1="0" x2="0" y2="1"><stop offset="0" stopColor="#f8b828" /><stop offset="1" stopColor="#f07a18" /></linearGradient>
            </defs>
            <path d="M6 49Q32 52 40 32Q60 26 66 36Q70 70 34 70Q10 66 6 49Z" fill="url(#mn)" />
            <path d="M10 31A10 10 0 0 1 8 13A13 13 0 0 1 33 13Q42 12 42 31Z" fill="url(#cl)" />
            <path d="M38 67A9 9 0 0 1 38 51A13 11 0 0 1 61 51A8 8 0 0 1 64 67Z" fill="url(#cl)" />
          </svg>
          <span className="absolute top-[1px] left-[36px] flex size-[36px] items-center justify-center rounded-full bg-[#c42b1c] text-[27px] leading-[36px]">1</span>
        </div>
        <Fit w={88} className="ml-[24px] pt-[1px] text-[41px] leading-[60px]">21°C</Fit>
      </div>
      <svg className="ml-[75px] h-[21px] w-[38px] shrink-0 self-center" viewBox="0 0 38 21" fill="none" stroke="#fff" strokeWidth="3">
        <path d="M1.500 19.500L19 2L36.500 19.500" />
      </svg>
      <svg className="ml-[29px] h-[31px] w-[48px] shrink-0 self-center" viewBox="0 0 48 31">
        <ellipse cx="24" cy="12" rx="14" ry="12" fill="#8b8b8b" />
        <path d="M10 31A12 12 0 0 1 12 7Q20 6 28 15L12 30Z" fill="#bdbdbd" />
        <path d="M28 15Q36 8 43 12Q48 16 48 22Q47 31 38 31Z" fill="#dedede" />
        <path d="M5 27L28 14L46 26Q43 31 38 31H10Q6 30 5 27Z" fill="#fff" />
      </svg>
      <svg className="ml-[24px] h-[44px] w-[50px] shrink-0 self-center" viewBox="0 0 50 44" fill="none" stroke="#fff" strokeWidth="3">
        <path d="M1.500 15H8L18 4.500V39L8 29H1.500ZM25 16Q30 22 25 28M32 9.500Q41 22 32 34.500M38 2Q55 22 38 42" />
      </svg>
      <svg className="mt-[45px] ml-[32px] h-[37px] w-[36px] shrink-0" viewBox="0 0 36 37" fill="none" stroke="#fff" strokeWidth="2.800">
        <path d="M1.500 36Q3 4 35 1.500M10 36Q12 14 35 11M19 36Q20 22 35 20" />
        <circle cx="31" cy="32" r="4.500" fill="#fff" stroke="none" />
      </svg>
      <Fit w={69} className="ml-[34px] pt-[32px] text-[35px] leading-[60px]">ENG</Fit>
      <div className="ml-[37px] flex w-[182px] shrink-0 flex-col items-center pt-[6px]">
        <Fit w={82} className="text-[35px] leading-[56px]">19:35</Fit>
        <Fit w={180} className="text-[35px] leading-[56px]">2023/11/02</Fit>
      </div>
      <svg className="ml-[54px] size-[48px] shrink-0 self-center" viewBox="0 0 48 48">
        <path d="M0 0H48V39H32L24 48L16 39H0Z" fill="#fff" />
        <path d="M9 10.500H39M9 19.500H39M9 28.500H27" stroke="#1c1c1c" strokeWidth="3" />
      </svg>
      <span className="mr-[12px] ml-auto w-[3px] bg-[#777]" />
    </div>
  );
}

export default function App() {
  return (
    <div className="flex h-[2160px] w-[3840px] flex-col overflow-hidden font-['Open_Sans','Noto_Sans',sans-serif]">
      <TabStrip />
      <AddressRow />
      <Bookmarks />
      <EditorBar />
      <Workspace />
      <Taskbar />
    </div>
  );
}
